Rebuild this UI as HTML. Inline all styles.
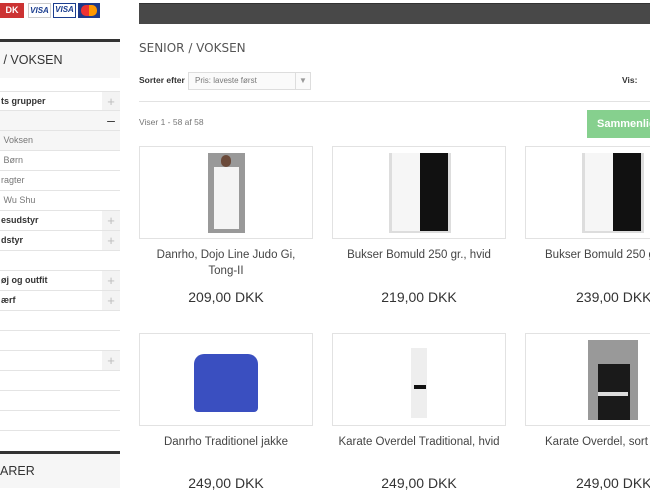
<!DOCTYPE html>
<html><head><meta charset="utf-8"><style>
*{margin:0;padding:0;box-sizing:border-box}
html,body{width:650px;height:500px;overflow:hidden}
body{background:#fff;font-family:"Liberation Sans",sans-serif;position:relative;color:#333}
#w{position:absolute;left:0;top:0;width:650px;height:500px;overflow:hidden}
.a{position:absolute}
.row{position:absolute;left:0;width:120px;height:20px;border-bottom:1px solid #e4e4e4;font-size:9px;line-height:19px;color:#777;padding-left:1px;white-space:nowrap;overflow:hidden}
.row b{color:#333}
.row .pl{position:absolute;right:0;top:0;width:18px;height:19px;background:#f3f3f3;color:#bbb;font-size:13px;text-align:center;line-height:19px}
.card{position:absolute;width:174px;height:93px;border:1px solid #e2e2e2;background:#fff}
.t{position:absolute;width:174px;text-align:center;font-size:11.5px;color:#444;line-height:16px}
.p{position:absolute;width:174px;text-align:center;font-size:14px;color:#333;font-family:"Liberation Sans",sans-serif}
</style></head><body><div id="w">
<div class="a" style="left:0;top:3px;width:24px;height:15px;background:#c33;color:#fff;font-size:9px;font-weight:bold;line-height:15px;text-align:center">DK</div>
<div class="a" style="left:28px;top:3px;width:23px;height:15px;border:1px solid #ccc;color:#1a3d8f;font-size:8px;font-weight:bold;font-style:italic;line-height:13px;text-align:center">VISA</div>
<div class="a" style="left:53px;top:3px;width:23px;height:15px;border:1px solid #1a3d8f;color:#1a3d8f;font-size:8px;font-weight:bold;font-style:italic;line-height:11px;text-align:center">VISA</div>
<div class="a" style="left:78px;top:3px;width:22px;height:15px;background:#1f3a8a"><div class="a" style="left:3px;top:2px;width:16px;height:11px;border-radius:5px;background:linear-gradient(90deg,#e33 50%,#f90 50%)"></div></div>

<div class="a" style="left:0;top:39px;width:120px;height:3px;background:#333"></div>
<div class="a" style="left:0;top:42px;width:120px;height:36px;background:#f6f6f6;font-size:12.5px;line-height:36px;color:#333">&nbsp;/ VOKSEN</div>

<div class="row" style="top:91px;border-top:1px solid #e4e4e4"><b>ts grupper</b><span class="pl">+</span></div>
<div class="row" style="top:111px;background:#f6f6f6"><span class="pl" style="background:#f6f6f6;color:#333;font-size:14px">–</span></div>
<div class="row" style="top:131px;background:#f6f6f6">&nbsp;Voksen</div>
<div class="row" style="top:151px">&nbsp;Børn</div>
<div class="row" style="top:171px">ragter</div>
<div class="row" style="top:191px">&nbsp;Wu Shu</div>
<div class="row" style="top:211px"><b>esudstyr</b><span class="pl">+</span></div>
<div class="row" style="top:231px"><b>dstyr</b><span class="pl">+</span></div>
<div class="row" style="top:251px"></div>
<div class="row" style="top:271px"><b>øj og outfit</b><span class="pl">+</span></div>
<div class="row" style="top:291px"><b>ærf</b><span class="pl">+</span></div>
<div class="row" style="top:311px"></div>
<div class="row" style="top:331px"></div>
<div class="row" style="top:351px"><span class="pl">+</span></div>
<div class="row" style="top:371px"></div>
<div class="row" style="top:391px"></div>
<div class="row" style="top:411px"></div>
<div class="a" style="left:0;top:451px;width:120px;height:3px;background:#333"></div>
<div class="a" style="left:0;top:454px;width:120px;height:34px;background:#f6f6f6;font-size:12.5px;line-height:34px;color:#333">ARER</div>

<div class="a" style="left:139px;top:3px;width:511px;height:21px;background:#484848;border-top:1px solid #333"></div>
<div class="a" style="left:139px;top:41px;font-size:12px;color:#555;font-family:'DejaVu Sans',sans-serif">SENIOR / VOKSEN</div>
<div class="a" style="left:139px;top:75px;font-size:8.5px;font-weight:bold;color:#333">Sorter efter</div>
<div class="a" style="left:188px;top:72px;width:123px;height:18px;border:1px solid #ddd;background:#fafafa;font-size:8px;color:#777;line-height:16px;padding-left:6px">Pris: laveste først<div class="a" style="right:0;top:0;width:15px;height:16px;border-left:1px solid #ddd;color:#999;text-align:center;font-size:8px">▼</div></div>
<div class="a" style="left:622px;top:75px;font-size:8.5px;font-weight:bold;color:#333">Vis:</div>
<div class="a" style="left:139px;top:101px;width:511px;height:1px;background:#e2e2e2"></div>
<div class="a" style="left:139px;top:117px;font-size:8.5px;color:#777">Viser 1 - 58 af 58</div>
<div class="a" style="left:587px;top:110px;width:63px;height:28px;background:#86d08e;color:#fff;font-weight:bold;font-size:11px;line-height:28px;padding-left:10px;white-space:nowrap;overflow:hidden">Sammenlign</div>

<div class="card" style="left:139px;top:146px"><div class="a" style="left:68px;top:6px;width:37px;height:80px;background:#999"><div class="a" style="left:6px;top:14px;width:25px;height:62px;background:#f4f4f4"></div><div class="a" style="left:13px;top:2px;width:10px;height:12px;background:#6b4a3a;border-radius:5px"></div></div></div>
<div class="card" style="left:332px;top:146px"><div class="a" style="left:56px;top:6px;width:62px;height:80px;background:#ddd"><div class="a" style="left:3px;top:0;width:28px;height:78px;background:#f6f6f6"></div><div class="a" style="left:31px;top:0;width:28px;height:78px;background:#111"></div></div></div>
<div class="card" style="left:525px;top:146px;width:125px;border-right:none"><div class="a" style="left:56px;top:6px;width:62px;height:80px;background:#ddd"><div class="a" style="left:3px;top:0;width:28px;height:78px;background:#f6f6f6"></div><div class="a" style="left:31px;top:0;width:28px;height:78px;background:#111"></div></div></div>
<div class="t" style="left:139px;top:247px">Danrho, Dojo Line Judo Gi,<br>Tong-II</div>
<div class="t" style="left:332px;top:247px">Bukser Bomuld 250 gr., hvid</div>
<div class="t" style="left:525px;top:247px;width:125px;text-align:left;padding-left:20px;white-space:nowrap;overflow:hidden">Bukser Bomuld 250 gr., sort</div>
<div class="p" style="left:139px;top:289px">209,00 DKK</div>
<div class="p" style="left:332px;top:289px">219,00 DKK</div>
<div class="p" style="left:525px;top:289px;width:125px;text-align:left;padding-left:51px;white-space:nowrap;overflow:hidden">239,00 DKK</div>

<div class="card" style="left:139px;top:333px"><div class="a" style="left:54px;top:20px;width:64px;height:58px;background:#3a4fc0;border-radius:10px 10px 4px 4px"></div></div>
<div class="card" style="left:332px;top:333px"><div class="a" style="left:78px;top:14px;width:16px;height:70px;background:#eee"><div class="a" style="left:3px;top:37px;width:12px;height:4px;background:#111"></div></div></div>
<div class="card" style="left:525px;top:333px;width:125px;border-right:none"><div class="a" style="left:62px;top:6px;width:50px;height:80px;background:#999"><div class="a" style="left:10px;top:24px;width:32px;height:56px;background:#1a1a1a"></div><div class="a" style="left:10px;top:52px;width:30px;height:4px;background:#ddd"></div></div></div>
<div class="t" style="left:139px;top:434px">Danrho Traditionel jakke</div>
<div class="t" style="left:332px;top:434px">Karate Overdel Traditional, hvid</div>
<div class="t" style="left:525px;top:434px;width:125px;text-align:left;padding-left:20px;white-space:nowrap;overflow:hidden">Karate Overdel, sort 2</div>
<div class="p" style="left:139px;top:475px">249,00 DKK</div>
<div class="p" style="left:332px;top:475px">249,00 DKK</div>
<div class="p" style="left:525px;top:475px;width:125px;text-align:left;padding-left:51px;white-space:nowrap;overflow:hidden">249,00 DKK</div>
</div></body></html>
